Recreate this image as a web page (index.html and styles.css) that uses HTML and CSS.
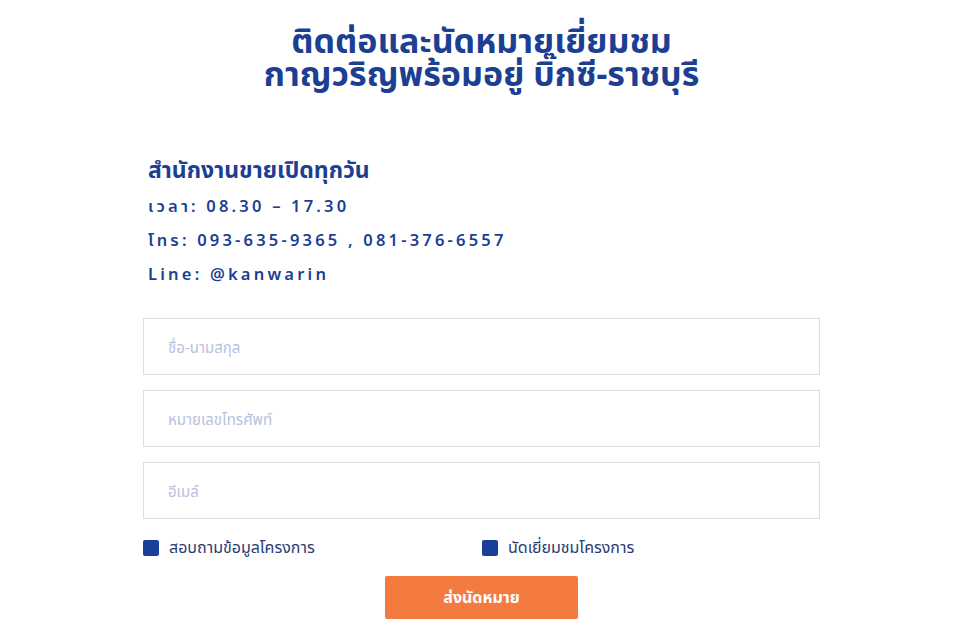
FILE: index.html
```html
<!DOCTYPE html>
<html lang="th">
<head>
<meta charset="utf-8">
<link rel="stylesheet" href="styles.css">
</head>
<body>
<div class="page">
  <h1 class="title">ติดต่อและนัดหมายเยี่ยมชม<br>กาญวริญพร้อมอยู่ บิ๊กซี-ราชบุรี</h1>
  <div class="info">
    <h2 class="info-head">สำนักงานขายเปิดทุกวัน</h2>
    <p class="info-line">เวลา: 08.30 – 17.30</p>
    <p class="info-line">โทร: 093-635-9365 , 081-376-6557</p>
    <p class="info-line">Line: @kanwarin</p>
  </div>
  <form class="form">
    <input class="field" type="text" placeholder="ชื่อ-นามสกุล">
    <input class="field" type="text" placeholder="หมายเลขโทรศัพท์">
    <input class="field" type="text" placeholder="อีเมล์">
    <div class="checks">
      <label class="check"><span class="box"></span>สอบถามข้อมูลโครงการ</label>
      <label class="check"><span class="box"></span>นัดเยี่ยมชมโครงการ</label>
    </div>
    <div class="actions">
      <button class="submit" type="button">ส่งนัดหมาย</button>
    </div>
  </form>
</div>
</body>
</html>
```
FILE: styles.css
```css
* { box-sizing: border-box; }
body {
  margin: 0;
  background: #fff;
  font-family: "Noto Sans", "Noto Sans Thai", "DejaVu Sans", sans-serif;
  color: #1c3f94;
}
.page {
  width: 677px;
  margin: 0 auto;
  padding-top: 24px;
}
.title {
  margin: 0;
  text-align: center;
  font-size: 34px;
  line-height: 33px;
  font-weight: 700;
  color: #1c3f94;
}
.info {
  padding: 64px 0 0 5px;
}
.info-head {
  margin: 0 0 5px;
  font-size: 23px;
  line-height: 30px;
  font-weight: 700;
}
.info-line {
  margin: 0;
  font-size: 16.5px;
  line-height: 34px;
  font-weight: 600;
  letter-spacing: 3.2px;
}
.form {
  display: flex;
  flex-direction: column;
  gap: 15px;
  margin-top: 27px;
}
.field {
  height: 57px;
  width: 100%;
  border: 1px solid #dedede;
  padding: 0 24px;
  font-family: inherit;
  font-size: 15px;
  outline: none;
  background: #fff;
}
.field::placeholder { color: #b7c1de; }
.checks {
  display: grid;
  grid-template-columns: 339px 1fr;
  margin-top: 2px;
}
.check {
  display: flex;
  align-items: center;
  gap: 10px;
  font-size: 16px;
  color: #2a3c72;
}
.box {
  width: 16px;
  height: 16px;
  border-radius: 2px;
  background: #1a3f9a;
  flex: none;
}
.actions {
  display: flex;
  justify-content: center;
  margin-top: 1px;
}
.submit {
  width: 193px;
  height: 43px;
  border: 0;
  border-radius: 2px;
  background: #f47b3f;
  color: #fff;
  font-family: inherit;
  font-size: 16px;
  font-weight: 700;
}
```
